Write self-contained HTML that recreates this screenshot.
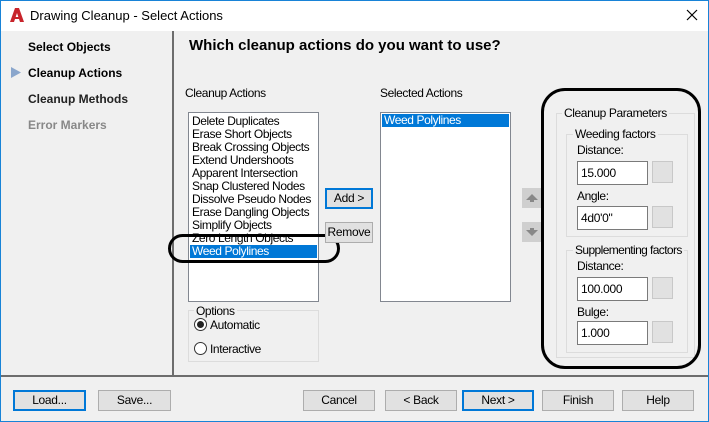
<!DOCTYPE html><html><head><style>
*{margin:0;padding:0;box-sizing:border-box}
body{width:709px;height:422px;position:relative;background:#f0f0f0;font-family:"Liberation Sans",sans-serif;font-size:12px;color:#000;overflow:hidden}
.a{position:absolute;white-space:nowrap}
.btn{position:absolute;background:#e1e1e1;border:1px solid #adadad;text-align:center;font-size:12px;line-height:19px;letter-spacing:-0.3px}
.bb{border:2px solid #0078d7;line-height:17px}
.lb{position:absolute;background:#fff;border:1px solid #828790;overflow:hidden}
.it{position:absolute;left:3px;font-size:12px;line-height:13px;white-space:nowrap;letter-spacing:-0.4px}
.sel{background:#0078d7;color:#fff}
.gb{position:absolute;border:1px solid #dcdcdc}
.gl{position:absolute;background:#f0f0f0;padding:0 2px;white-space:nowrap;letter-spacing:-0.4px}
.in{position:absolute;background:#fff;border:1px solid #7a7a7a;padding-left:3px;line-height:22px;letter-spacing:-0.3px}
.sq{position:absolute;background:#e1e1e1;border:1px solid #c8c8c8}
.t{letter-spacing:-0.4px}
</style></head><body>
<div class="a" style="left:0;top:0;width:709px;height:31px;background:#fff"></div>
<div class="a" style="left:0;top:0;width:709px;height:422px;border:1px solid #1883d7"></div>
<svg class="a" style="left:9px;top:7px" width="16" height="16"><path d="M1 15 L6 1 L10 1 L15 15 L11 15 L8 6 L5 15Z" fill="#c8242b"/><path d="M5 11h6" stroke="#c8242b" stroke-width="2"/></svg>
<div class="a" style="left:30px;top:8px;font-size:13px">Drawing Cleanup - Select Actions</div>
<svg class="a" style="left:686px;top:9px" width="12" height="12"><path d="M1 1L11 11M11 1L1 11" stroke="#000" stroke-width="1.2"/></svg>
<div class="a" style="left:172px;top:31px;width:2px;height:345px;background:#6d6d6d"></div>
<div class="a" style="left:1px;top:375px;width:707px;height:2px;background:#6d6d6d"></div>
<div class="a" style="left:28px;top:40px;font-weight:bold">Select Objects</div>
<svg class="a" style="left:11px;top:67px" width="10" height="11"><path d="M0 0L10 5.5L0 11Z" fill="#8aa6cc"/></svg>
<div class="a" style="left:28px;top:66px;font-weight:bold">Cleanup Actions</div>
<div class="a" style="left:28px;top:92px;font-weight:bold;color:#222">Cleanup Methods</div>
<div class="a" style="left:28px;top:118px;font-weight:bold;color:#888">Error Markers</div>
<div class="a" style="left:189px;top:37px;font-weight:bold;font-size:15px">Which cleanup actions do you want to use?</div>
<div class="a t" style="left:185px;top:86px">Cleanup Actions</div>
<div class="lb" style="left:188px;top:112px;width:131px;height:190px">
<div class="it" style="top:2px">Delete Duplicates</div><div class="it" style="top:15px">Erase Short Objects</div><div class="it" style="top:28px">Break Crossing Objects</div><div class="it" style="top:41px">Extend Undershoots</div><div class="it" style="top:54px">Apparent Intersection</div><div class="it" style="top:67px">Snap Clustered Nodes</div><div class="it" style="top:80px">Dissolve Pseudo Nodes</div><div class="it" style="top:93px">Erase Dangling Objects</div><div class="it" style="top:106px">Simplify Objects</div><div class="it" style="top:119px">Zero Length Objects</div>
<div class="it sel" style="top:132px;left:1px;width:127px;padding-left:2px">Weed Polylines</div></div>
<div class="a" style="left:168px;top:234px;width:172px;height:29px;border:3px solid #000;border-radius:16px"></div>
<div class="btn bb" style="left:325px;top:188px;width:48px;height:21px">Add &gt;</div>
<div class="btn" style="left:325px;top:222px;width:48px;height:21px">Remove</div>
<div class="a t" style="left:380px;top:86px">Selected Actions</div>
<div class="lb" style="left:380px;top:112px;width:131px;height:190px"><div class="it sel" style="top:1px;left:1px;width:127px;padding-left:2px">Weed Polylines</div></div>
<div class="gb" style="left:188px;top:310px;width:131px;height:52px"></div>
<div class="gl" style="left:194px;top:304px">Options</div>
<div class="a" style="left:194px;top:318px;width:13px;height:13px;border:1px solid #333;border-radius:50%;background:#fff"><div style="margin:2px;width:7px;height:7px;border-radius:50%;background:#222"></div></div>
<div class="a t" style="left:210px;top:318px">Automatic</div>
<div class="a" style="left:194px;top:342px;width:13px;height:13px;border:1px solid #333;border-radius:50%;background:#fff"></div>
<div class="a t" style="left:210px;top:342px">Interactive</div>
<div class="a" style="left:522px;top:188px;width:20px;height:20px;background:#cfcfcf"><svg width="20" height="20"><path d="M4 12L10 6L16 12H12V14H8V12Z" fill="#888"/></svg></div>
<div class="a" style="left:522px;top:222px;width:20px;height:20px;background:#cfcfcf"><svg width="20" height="20"><path d="M4 8L10 14L16 8H12V6H8V8Z" fill="#888"/></svg></div>
<div class="gb" style="left:556px;top:113px;width:139px;height:245px"></div>
<div class="gl" style="left:562px;top:106px">Cleanup Parameters</div>
<div class="gb" style="left:566px;top:134px;width:122px;height:103px"></div>
<div class="gl" style="left:573px;top:127px">Weeding factors</div>
<div class="a t" style="left:577px;top:143px">Distance:</div>
<div class="in" style="left:577px;top:161px;width:71px;height:24px">15.000</div><div class="sq" style="left:652px;top:161px;width:21px;height:22px"></div>
<div class="a t" style="left:577px;top:189px">Angle:</div>
<div class="in" style="left:577px;top:206px;width:71px;height:24px">4d0'0"</div><div class="sq" style="left:652px;top:206px;width:21px;height:22px"></div>
<div class="gb" style="left:566px;top:250px;width:122px;height:103px"></div>
<div class="gl" style="left:573px;top:243px;letter-spacing:-0.6px">Supplementing factors</div>
<div class="a t" style="left:577px;top:259px">Distance:</div>
<div class="in" style="left:577px;top:277px;width:71px;height:24px">100.000</div><div class="sq" style="left:652px;top:277px;width:21px;height:22px"></div>
<div class="a t" style="left:577px;top:305px">Bulge:</div>
<div class="in" style="left:577px;top:321px;width:71px;height:24px">1.000</div><div class="sq" style="left:652px;top:321px;width:21px;height:22px"></div>
<div class="a" style="left:541px;top:88px;width:160px;height:281px;border:3px solid #000;border-radius:24px"></div>
<div class="btn bb" style="left:13px;top:390px;width:73px;height:21px">Load...</div>
<div class="btn" style="left:98px;top:390px;width:73px;height:21px">Save...</div>
<div class="btn" style="left:303px;top:390px;width:72px;height:21px">Cancel</div>
<div class="btn" style="left:385px;top:390px;width:72px;height:21px">&lt; Back</div>
<div class="btn bb" style="left:462px;top:390px;width:72px;height:21px">Next &gt;</div>
<div class="btn" style="left:542px;top:390px;width:72px;height:21px">Finish</div>
<div class="btn" style="left:622px;top:390px;width:72px;height:21px">Help</div>
</body></html>
